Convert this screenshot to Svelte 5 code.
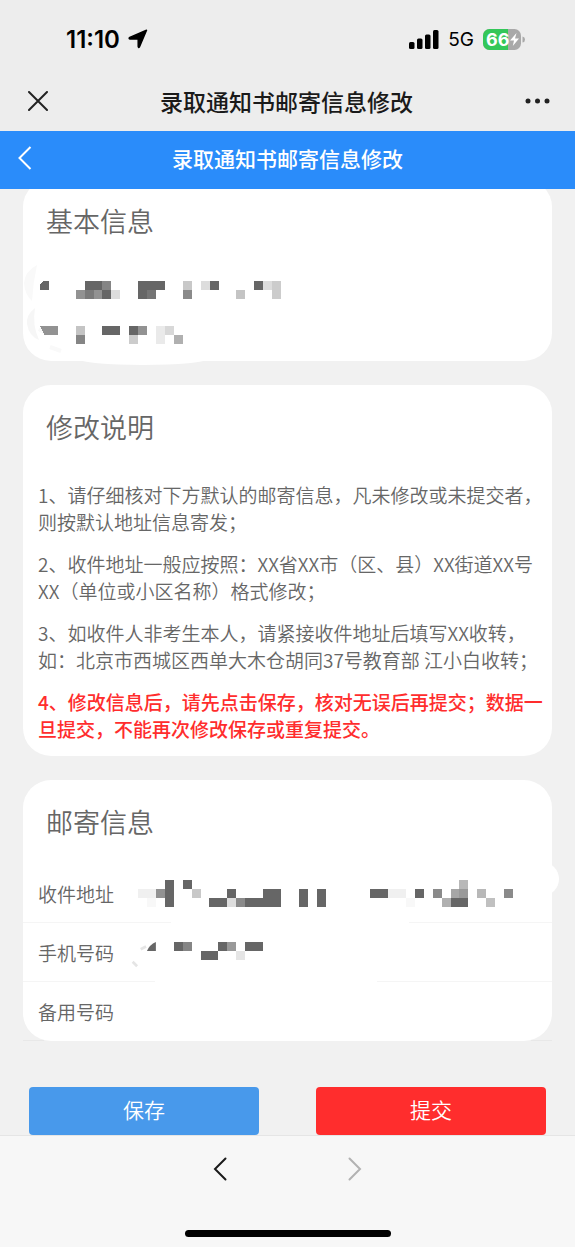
<script lang="ts">
  // [column, row, width, height, colour], counted in mosaic cells
  type Cell = [number, number, number, number, string];

  const nameCells: Cell[] = [
    [5, 0, 2, 1, '#666'], [7, 0, 1, 1, '#858585'], [4, 1, 1, 1, '#929292'],
    [5, 1, 1, 1, '#7a7a7a'], [6, 1, 1, 1, '#929292'], [7, 1, 1, 1, '#666'],
    [8, 1, 1, 1, '#ddd'], [11, 0, 3, 1, '#666'], [11, 1, 1, 1, '#666'],
    [12, 1, 1, 1, '#757575'], [16, 0, 1, 1, '#c8c8c8'], [16, 1, 1, 1, '#8a8a8a'],
    [18, 0, 1, 1, '#ddd'], [19, 0, 1, 1, '#666'], [22, 1, 1, 1, '#c4c4c4'],
    [24, 0, 1, 1, '#666'], [25, 0, 1, 1, '#ddd'], [26, 0, 1, 2, '#ccc']
  ];

  const numberCells: Cell[] = [
    [4, 0, 1, 1, '#c4c4c4'], [4, 1, 1, 1, '#858585'], [7, 0, 2, 1, '#666'],
    [10, 0, 1, 1, '#666'], [11, 0, 1, 1, '#929292'], [10, 1, 1, 1, '#ccc'],
    [13, 0, 1, 2, '#eaeaea'], [14, 0, 1, 1, '#d8d8d8'], [15, 1, 1, 1, '#b0b0b0']
  ];

  const addressCells: Cell[] = [
    [0, 1, 2, 1, '#f0f0f0'], [1, 2, 1, 1, '#f8f8f8'], [2, 1, 1, 1, '#929292'],
    [3, 0, 1, 3, '#666'], [5, 0, 1, 1, '#666'], [6, 1, 1, 1, '#c8c8c8'],
    [8, 2, 2, 1, '#666'], [10, 1, 1, 1, '#666'], [10, 2, 1, 1, '#ddd'],
    [11, 2, 1, 1, '#8a8a8a'], [12, 2, 2, 1, '#666'], [14, 1, 2, 2, '#666'],
    [18, 1, 1, 2, '#666'], [20, 1, 1, 2, '#666'], [26, 1, 2, 1, '#666'],
    [28, 1, 2, 1, '#f0f0f0'], [30, 2, 1, 1, '#f8f8f8'], [31, 1, 1, 1, '#666'],
    [33, 1, 1, 1, '#8a8a8a'], [34, 2, 1, 1, '#b0b0b0'], [35, 1, 1, 1, '#a6a6a6'],
    [35, 2, 2, 1, '#666'], [36, 0, 1, 1, '#b8b8b8'], [36, 1, 1, 1, '#999'],
    [38, 1, 1, 1, '#b8b8b8'], [39, 2, 1, 1, '#c0c0c0'], [41, 1, 1, 1, '#8a8a8a']
  ];

  const phoneCells: Cell[] = [
    [4, 0, 1, 1, '#666'], [5, 0, 1, 1, '#858585'], [7, 1, 2, 1, '#666'],
    [9, 0, 1, 1, '#666'], [10, 0, 1, 1, '#999'], [11, 1, 1, 1, '#e5e5e5'],
    [12, 0, 2, 1, '#666']
  ];

  let backupPhone = $state('');
</script>

{#snippet cells(list: Cell[])}
  {#each list as [x, y, w, h, fill]}
    <rect {x} {y} width={w} height={h} {fill} />
  {/each}
{/snippet}

<div class="screen">
  <div class="status-bar">
    <div class="status-left">
      <span class="time">11:10</span>
      <svg width="20" height="20" viewBox="0 0 20 20" aria-hidden="true">
        <path d="M18.500 1.300 L11.500 17.800 Q10.400 19.200 10.200 17.500 V10 H2 Q.4 9.500 1.800 8.400 Z" fill="#000" stroke="#000" stroke-width="1.500" stroke-linejoin="round" />
      </svg>
    </div>
    <div class="status-right">
      <svg width="30" height="19" viewBox="0 0 30 19" aria-hidden="true">
        <rect x="0" y="12" width="5.500" height="7" rx="1.500" />
        <rect x="8" y="8.500" width="5.500" height="10.500" rx="1.500" />
        <rect x="16" y="4.500" width="5.500" height="14.500" rx="1.500" />
        <rect x="24" y="0" width="5.500" height="19" rx="1.500" />
      </svg>
      <span class="network">5G</span>
      <svg width="42" height="21" viewBox="0 0 42 21" role="img" aria-label="66%">
        <clipPath id="battery"><rect width="38" height="21" rx="6.500" /></clipPath>
        <g clip-path="url(#battery)">
          <rect width="38" height="21" fill="#a9a9a9" />
          <rect width="25" height="21" fill="#34c759" />
        </g>
        <path d="M39.500 7.500 Q42 8 42 10.500 Q42 13 39.500 13.500 Z" fill="#a9a9a9" />
        <text class="level" x="3" y="17">66</text>
        <path d="M33.500 4 L27 11.500 H31 L29.800 17 L36 9.500 H32 Z" fill="#fff" />
      </svg>
    </div>
  </div>

  <div class="nav-bar">
    <button class="icon-btn" aria-label="关闭">
      <svg width="20" height="20" viewBox="0 0 20 20">
        <path d="M1 1 L19 19 M19 1 L1 19" stroke="#222" stroke-width="2" stroke-linecap="round" />
      </svg>
    </button>
    <span class="nav-title">录取通知书邮寄信息修改</span>
    <button class="icon-btn" aria-label="更多">
      <svg width="25" height="6" viewBox="0 0 25 6">
        <circle cx="3" cy="3" r="2.500" fill="#222" />
        <circle cx="12.500" cy="3" r="2.500" fill="#222" />
        <circle cx="22" cy="3" r="2.500" fill="#222" />
      </svg>
    </button>
  </div>

  <header class="page-header">
    <button class="icon-btn" aria-label="返回">
      <svg width="14" height="24" viewBox="0 0 14 24">
        <path d="M12.500 1 L1.500 12 L12.500 23" fill="none" stroke="#fff" stroke-width="2" />
      </svg>
    </button>
    <h1>录取通知书邮寄信息修改</h1>
  </header>

  <main>
    <section class="card basic">
      <h2>基本信息</h2>
      <div class="basic-row">
        <svg width="241" height="18" viewBox="0 0 27 2" shape-rendering="crispEdges">
          <path d="M0 1 V.4 L.4 0 H1 V1 Z" fill="#666" />
          {@render cells(nameCells)}
        </svg>
      </div>
      <div class="basic-row">
        <svg width="241" height="18" viewBox="0 0 27 2" shape-rendering="crispEdges">
          <path d="M0 0 H2 V1 H.5 Z" fill="#929292" />
          {@render cells(numberCells)}
        </svg>
      </div>
      <svg class="smudge" width="44" height="96" viewBox="0 0 44 96" aria-hidden="true">
        <path d="M14 2 Q2 8 1 20 Q2 32 9 38 Q10 20 14 2 Z" fill="#f9f9f9" />
        <path d="M12 45 Q3 52 4 61 Q6 73 16 77 Q9 62 12 45 Z" fill="#f6f6f6" />
        <path d="M16 66 L24 71 M27 84 L38 88" stroke="#f9f9f9" stroke-width="4" />
      </svg>
    </section>

    <section class="card">
      <h2>修改说明</h2>
      <div class="notes">
        <p>1、请仔细核对下方默认的邮寄信息，凡未修改或未提交者，则按默认地址信息寄发；</p>
        <p>2、收件地址一般应按照：XX省XX市（区、县）XX街道XX号XX（单位或小区名称）格式修改；</p>
        <p>3、如收件人非考生本人，请紧接收件地址后填写XX收转，如：北京市西城区西单大木仓胡同37号教育部 江小白收转；</p>
        <p class="warning">4、修改信息后，请先点击保存，核对无误后再提交；数据一旦提交，不能再次修改保存或重复提交。</p>
      </div>
    </section>

    <section class="card mailing">
      <h2>邮寄信息</h2>
      <div class="row address">
        <span class="label">收件地址</span>
        <svg width="375" height="27" viewBox="0 0 42 3" shape-rendering="crispEdges">
          {@render cells(addressCells)}
        </svg>
      </div>
      <div class="row phone">
        <span class="label">手机号码</span>
        <svg width="125" height="18" viewBox="0 0 14 2" overflow="visible">
          <path d="M1 1 Q1.300 .3 2 0 V1 Z" fill="#666" />
          <path d="M.3 .8 L.9 .5 M-.6 2.200 L-.1 2.700" stroke="#e5e5e5" stroke-width=".3" />
          <g shape-rendering="crispEdges">{@render cells(phoneCells)}</g>
        </svg>
      </div>
      <div class="row">
        <label class="label" for="backup">备用号码</label>
        <input id="backup" type="tel" bind:value={backupPhone} />
      </div>
    </section>

    <div class="actions">
      <button class="save">保存</button>
      <button class="submit">提交</button>
    </div>
  </main>

  <footer>
    <div class="history">
      <button class="icon-btn" aria-label="后退">
        <svg width="14" height="24" viewBox="0 0 14 24">
          <path d="M12.500 1.500 L2 12 L12.500 22.500" fill="none" stroke="#1a1a1a" stroke-width="2" stroke-linecap="round" />
        </svg>
      </button>
      <button class="icon-btn" aria-label="前进" disabled>
        <svg width="14" height="24" viewBox="0 0 14 24">
          <path d="M1.500 1.500 L12 12 L1.500 22.500" fill="none" stroke="#b2b2b2" stroke-width="2" stroke-linecap="round" />
        </svg>
      </button>
    </div>
    <div class="home-indicator"></div>
  </footer>
</div>

<style>
  :global(body) {
    margin: 0;
    background: #f7f7f7;
  }

  .screen {
    display: flex;
    flex-direction: column;
    min-height: 100vh;
    background: #f1f1f1;
    color: #666;
    font-family: "Noto Sans CJK SC", sans-serif;
    font-weight: 350;
  }

  button {
    border: none;
    font-family: inherit;
    font-weight: inherit;
    cursor: pointer;
  }

  .icon-btn {
    display: flex;
    padding: 0;
    background: none;
  }

  .status-bar,
  .nav-bar {
    display: flex;
    align-items: center;
    justify-content: space-between;
    background: #ededed;
  }

  .status-bar {
    height: 70px;
    padding: 8px 50px 0 66px;
    box-sizing: border-box;
    color: #000;
    font-family: Inter, sans-serif;
  }

  .status-left,
  .status-right {
    display: flex;
    align-items: center;
  }

  .status-left {
    gap: 8px;
  }

  .status-right {
    gap: 9px;
  }

  .time {
    font-size: 24px;
    font-weight: 600;
  }

  .network {
    font-size: 19px;
    font-weight: 400;
  }

  .level {
    fill: #fff;
    font-family: Inter, sans-serif;
    font-size: 18px;
    font-weight: 700;
  }

  .nav-bar {
    height: 61px;
    padding: 0 25px 0 28px;
  }

  .nav-title {
    color: #1a1a1a;
    font-size: 23px;
    font-weight: 500;
  }

  .page-header {
    position: relative;
    z-index: 1;
    display: grid;
    grid-template-columns: 14px 1fr 14px;
    align-items: center;
    height: 54px;
    padding: 0 18px 4px;
    background: #2a8cfa;
    color: #fff;
  }

  h1 {
    margin: 0;
    font-size: 21px;
    font-weight: 500;
    text-align: center;
  }

  main {
    flex: 1;
    padding: 0 4%;
  }

  .card {
    position: relative;
    margin-bottom: 24px;
    border-radius: 28px;
    background: #fff;
  }

  h2 {
    margin: 0;
    padding-left: 23px;
    font-size: 27px;
    font-weight: inherit;
    line-height: 84px;
  }

  .basic {
    margin-top: -10px;
    padding-bottom: 4px;
  }

  /* smudge left below the card by the eraser brush */
  .basic::after {
    content: "";
    position: absolute;
    bottom: -4px;
    left: 56px;
    width: 128px;
    height: 12px;
    border-radius: 50%;
    background: #fff;
  }

  .smudge {
    position: absolute;
    bottom: 2px;
    left: 0;
  }

  .basic h2 {
    padding-bottom: 4px;
  }

  .basic-row {
    position: relative;
    z-index: 1;
    display: flex;
    align-items: center;
    height: 45px;
    padding-left: 17px;
  }

  .notes {
    padding: 12px 8px 14px 15px;
    font-size: 19px;
    line-height: 27px;
  }

  p {
    margin: 0 0 15px;
  }

  p:last-child {
    margin-bottom: 0;
  }

  .warning {
    color: #ff2d2d;
    font-weight: 500;
  }

  .mailing::before {
    content: "";
    position: absolute;
    top: 82px;
    right: -7px;
    width: 34px;
    height: 34px;
    border-radius: 50%;
    background: #fff;
  }

  .mailing::after {
    content: "";
    position: absolute;
    right: 0;
    bottom: 0;
    left: 0;
    height: 1px;
    background: linear-gradient(to right, #e8e8e8 4%, transparent 4% 96%, #e8e8e8 96%);
  }

  .row {
    position: relative;
    display: flex;
    align-items: center;
    height: 59px;
    padding-left: 15px;
  }

  .address {
    background: linear-gradient(to right, #f5f5f5 28%, #fff 28% 73%, #f5f5f5 73%) bottom / 100% 1px no-repeat;
  }

  .phone {
    background: linear-gradient(to right, #f5f5f5 25%, #fff 25% 67%, #f5f5f5 67%) bottom / 100% 1px no-repeat;
  }

  .phone svg {
    margin-bottom: 4px;
  }

  .label {
    width: 100px;
    flex: none;
    font-size: 19px;
  }

  input {
    flex: 1;
    min-width: 0;
    margin-right: 28px;
    padding: 0;
    border: none;
    outline: none;
    background: none;
    color: inherit;
    font: inherit;
    font-size: 19px;
  }

  .actions {
    display: grid;
    grid-template-columns: 1fr 1fr;
    gap: 57px;
    padding: 22px 6px 0;
  }

  .actions button {
    height: 48px;
    padding: 0 0 4px;
    border-radius: 4px;
    color: #fff;
    font-size: 21px;
  }

  .actions .save {
    background: #4899eb;
  }

  .actions .submit {
    background: #ff2d2d;
  }

  footer {
    display: flex;
    flex-direction: column;
    align-items: center;
    justify-content: space-between;
    height: 112px;
    padding: 21px 0 10px;
    border-top: 1px solid #e5e5e5;
    box-sizing: border-box;
    background: #f7f7f7;
  }

  .history {
    display: flex;
    gap: 121px;
  }

  .home-indicator {
    width: 206px;
    height: 7px;
    border-radius: 4px;
    background: #000;
  }
</style>
